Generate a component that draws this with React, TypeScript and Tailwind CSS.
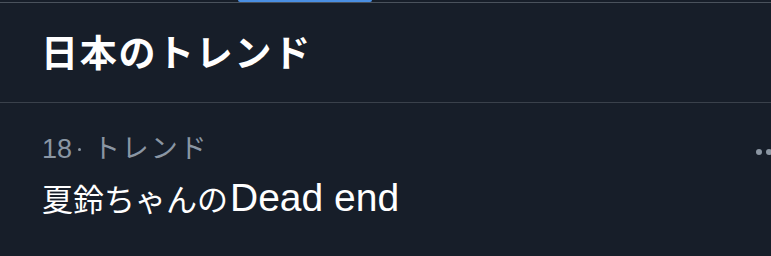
const font = "font-['Liberation_Sans','Noto_Sans_CJK_JP',sans-serif]";

function MoreDots() {
  return (
    <svg width="30" height="8" viewBox="0 0 30 8" className="absolute left-[753px] top-[45px]">
      <circle cx="6" cy="4" r="3" fill="#8b96a2" />
      <circle cx="16" cy="4" r="3" fill="#8b96a2" />
      <circle cx="26" cy="4" r="3" fill="#8b96a2" />
    </svg>
  );
}

export default function App() {
  return (
    <div className={`relative h-[256px] w-[771px] overflow-hidden bg-[#171e29] ${font}`}>
      {/* tab indicator + bar border */}
      <div className="flex h-[2px]">
        <div className="ml-[238px] w-[134px] rounded-b-sm bg-[#4a8fe3]" />
      </div>
      <div className="h-px bg-[#4a525c]" />

      <div className="h-[99px] pl-[41px] pt-[30px]">
        <h2 className="text-[37px] font-bold leading-[44px] tracking-[1.7px] text-white">日本のトレンド</h2>
      </div>
      <div className="h-px bg-[#3a414b]" />

      <div className="relative pl-[42px] pt-[31px]">
        <div className="flex items-center leading-[30px] text-[#8a96a3]">
          <span className="text-[27px]">18</span>
          <span className="ml-[6px] mr-[12px] h-[3px] w-[3px] rounded-full bg-[#8a96a3]" />
          <span className="text-[27px] tracking-[1.8px]">トレンド</span>
        </div>
        <p className="mt-[14px] flex items-baseline leading-[40px] text-white">
          <span className="text-[31px]">夏鈴ちゃんの</span>
          <span className="ml-[2px] text-[39px]">Dead end</span>
        </p>
        <MoreDots />
      </div>
    </div>
  );
}
